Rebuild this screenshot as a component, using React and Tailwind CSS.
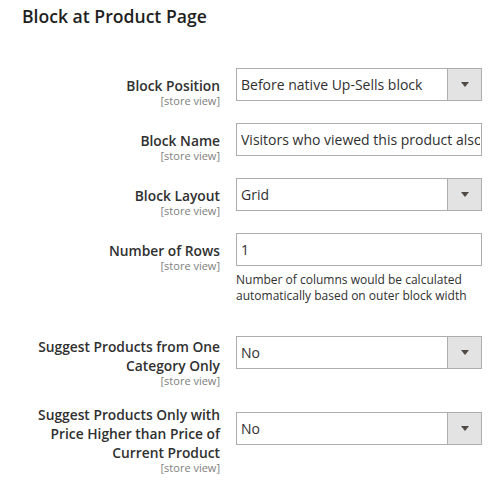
import React from 'react';

const font = { fontFamily: '"Open Sans", "Liberation Sans", sans-serif' };

const Label = ({ lines, className = '' }) => (
    <div className={`w-[220px] shrink-0 text-right ${className}`}>
        <div className="text-[13.8px] leading-[19px] font-semibold text-[#303030]">
            {lines.map((l, i) => (
                <div key={i}>{l}</div>
            ))}
        </div>
        <div className="text-[11px] leading-[12px] text-[#808080]">[store view]</div>
    </div>
);

const Select = ({ value }) => (
    <div className="flex h-[33px] w-[246px] border border-[#adadad] bg-white">
        <div className="flex-1 pl-[4px] text-[14px] leading-[31px] text-[#303030]">{value}</div>
        <div className="flex w-[34px] items-center justify-center border-l border-[#adadad] bg-[#e3e3e3]">
            <svg width="8" height="5" viewBox="0 0 8 5">
                <path d="M0 0h8L4 5z" fill="#514943" />
            </svg>
        </div>
    </div>
);

const TextInput = ({ value }) => (
    <input
        readOnly
        value={value}
        className="block h-[33px] w-[246px] border border-[#adadad] bg-white pl-[4px] pr-[1px] text-[14px] text-[#303030] outline-none"
        style={font}
    />
);

export default function App() {
    return (
        <div className="h-[483px] w-[503px] overflow-hidden bg-white" style={font}>
            <h2 className="pl-[22px] pt-[5px] text-[17.6px] leading-[23px] font-semibold text-[#1f1f1f]">
                Block at Product Page
            </h2>

            <div className="flex flex-col">
                <div className="mt-[40px] flex gap-[16px]">
                    <Label lines={['Block Position']} className="pt-[7.5px]" />
                    <Select value="Before native Up-Sells block" />
                </div>

                <div className="mt-[16.5px] flex gap-[16px]">
                    <Label lines={['Block Name']} className="pt-[7.5px]" />
                    <TextInput value="Visitors who viewed this product also viewed" />
                </div>

                <div className="mt-[16.5px] flex gap-[16px]">
                    <Label lines={['Block Layout']} className="pt-[7.5px]" />
                    <Select value="Grid" />
                </div>

                <div className="mt-[16.5px] flex gap-[16px]">
                    <Label lines={['Number of Rows']} className="pt-[7.5px]" />
                    <div>
                        <TextInput value="1" />
                        <p className="mt-[6px] text-[12px] leading-[16px] text-[#303030]">
                            Number of columns would be calculated
                            <br />
                            automatically based on outer block width
                        </p>
                    </div>
                </div>

                <div className="mt-[32px] flex gap-[16px]">
                    <Label lines={['Suggest Products from One', 'Category Only']} className="pt-[1px]" />
                    <Select value="No" />
                </div>

                <div className="mt-[17.5px] flex gap-[16px]">
                    <Label lines={['Suggest Products Only with', 'Price Higher than Price of', 'Current Product']} />
                    <div className="pt-[7.5px]">
                        <Select value="No" />
                    </div>
                </div>
            </div>
        </div>
    );
}
